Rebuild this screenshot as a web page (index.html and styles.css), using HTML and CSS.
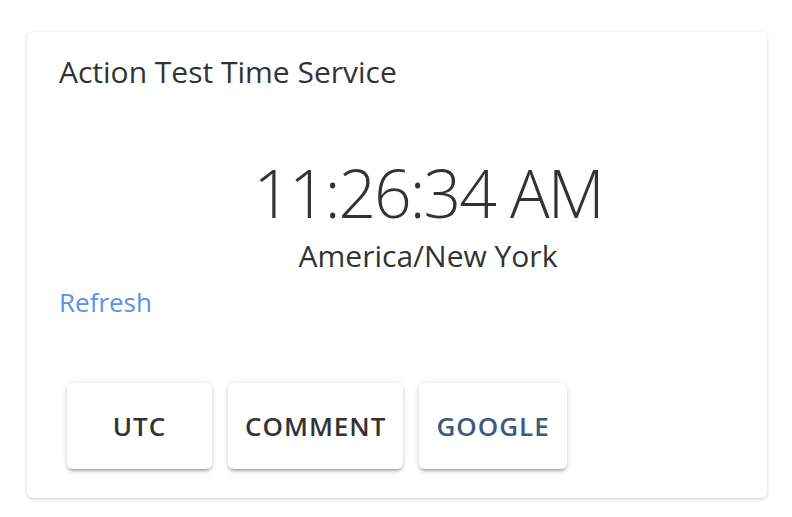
FILE: index.html
```html
<!DOCTYPE html>
<html lang="en">
<head>
<meta charset="utf-8">
<title>Action Test Time Service</title>
<link rel="stylesheet" href="styles.css">
</head>
<body>
<div class="page">
  <section class="card">
    <h1 class="card-title">Action Test Time Service</h1>
    <div class="clock">
      <div class="clock-time">11:26:34 AM</div>
      <div class="clock-zone">America/New York</div>
    </div>
    <a class="refresh" href="#">Refresh</a>
    <div class="actions">
      <button class="btn">UTC</button>
      <button class="btn">COMMENT</button>
      <button class="btn btn-primary">GOOGLE</button>
    </div>
  </section>
</div>
</body>
</html>
```
FILE: styles.css
```css
html, body {
  margin: 0;
  padding: 0;
  background: #ffffff;
}
body {
  font-family: "Open Sans", "Noto Sans", sans-serif;
  color: #333333;
}
.page {
  padding: 32px 25px 19px 27px;
}
.card {
  background: #ffffff;
  border-radius: 6px;
  box-shadow: 0 1px 4px rgba(0, 0, 0, 0.16), 0 1px 2px rgba(0, 0, 0, 0.06);
  padding: 22px 32px 29px 32px;
  display: flex;
  flex-direction: column;
  height: 466px;
  box-sizing: border-box;
}
.card-title {
  margin: 0;
  font-size: 30px;
  line-height: 36px;
  font-weight: 400;
  color: #333333;
}
.clock {
  margin-top: 64px;
  padding-left: 62px;
  display: flex;
  flex-direction: column;
  align-items: center;
}
.clock-time {
  font-size: 66px;
  line-height: 76px;
  font-weight: 300;
  letter-spacing: -2px;
  color: #333333;
}
.clock-zone {
  margin-top: 8px;
  font-size: 30px;
  line-height: 36px;
  font-weight: 400;
  color: #333333;
}
.refresh {
  margin-top: 12px;
  align-self: flex-start;
  font-size: 26px;
  line-height: 32px;
  color: #5b90ea;
  text-decoration: none;
}
.actions {
  margin-top: auto;
  display: flex;
  gap: 16px;
  padding-left: 8px;
}
.btn {
  font-family: inherit;
  min-width: 145px;
  height: 86px;
  padding: 0 17px;
  border: none;
  border-radius: 6px;
  background: #ffffff;
  color: #333333;
  font-size: 26px;
  font-weight: 600;
  letter-spacing: 1px;
  box-shadow: 0 4px 2px -3px rgba(0, 0, 0, 0.2), 0 3px 3px 0 rgba(0, 0, 0, 0.14), 0 1px 7px 0 rgba(0, 0, 0, 0.12);
  cursor: pointer;
}
.btn-primary {
  color: #3b5b7e;
}
```
